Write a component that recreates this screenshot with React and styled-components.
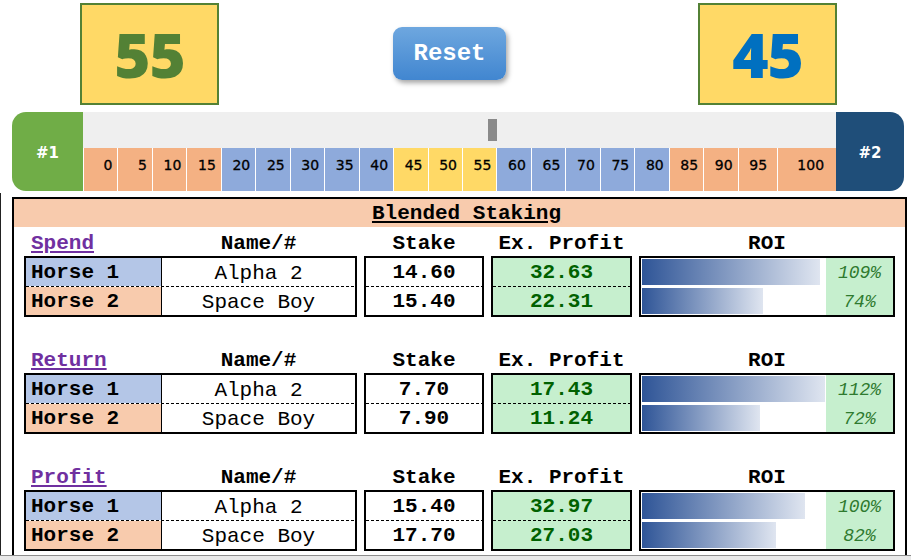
import React from 'react';
import styled, { createGlobalStyle } from 'styled-components';

const GlobalStyle = createGlobalStyle`
  html, body {
    margin: 0;
    padding: 0;
    background: #fff;
  }
  body {
    font-family: 'Liberation Mono', 'Courier New', monospace;
    color: #000;
  }
`;

const PageEl = styled.div`
  width: 911px;
  height: 560px;
  overflow: hidden;
  display: flex;
  flex-direction: column;
`;

// Top scores + reset
const TopRowEl = styled.div`
  flex: none;
  height: 112px;
  display: flex;
  align-items: flex-start;
  padding-left: 80px;
  box-sizing: border-box;
`;

const ScoreBoxEl = styled.div`
  margin-top: 3px;
  margin-left: ${({ offset }) => offset || 0}px;
  width: 139px;
  height: 102px;
  box-sizing: border-box;
  border: 2px solid #538135;
  background: #ffd966;
  display: flex;
  align-items: center;
  justify-content: center;
  font-family: 'Open Sans', 'DejaVu Sans', sans-serif;
  font-weight: 800;
  font-size: 62px;
  color: ${({ color }) => color};
  letter-spacing: -1px;
`;

const ResetButtonEl = styled.button`
  margin-top: 27px;
  margin-left: 174px;
  width: 113px;
  height: 53px;
  border: none;
  border-radius: 9px;
  background: linear-gradient(to bottom, #6ea7df, #4186d0);
  box-shadow: 2px 3px 5px rgba(0, 0, 0, 0.35);
  color: #fff;
  font-family: 'Liberation Mono', 'Courier New', monospace;
  font-weight: 700;
  font-size: 24px;
  padding: 0;
  cursor: pointer;
`;

// Slider band
const SliderEl = styled.div`
  flex: none;
  margin-left: 12px;
  width: 892px;
  height: 79px;
  display: flex;
`;

const CapEl = styled.div`
  width: ${({ w }) => w}px;
  flex: none;
  background: ${({ bg }) => bg};
  border-radius: ${({ side }) => (side === 'left' ? '14px 0 0 14px' : '0 14px 14px 0')};
  color: #fff;
  font-family: 'DejaVu Sans', Verdana, sans-serif;
  font-weight: 700;
  font-size: 15px;
  display: flex;
  align-items: center;
  justify-content: center;
  padding-top: 2px;
  box-sizing: border-box;
`;

const TrackEl = styled.div`
  position: relative;
  flex: 1;
  display: flex;
  flex-direction: column;
`;

const TrackTopEl = styled.div`
  height: 36px;
  flex: none;
  background: #efefef;
`;

const ThumbEl = styled.div`
  position: absolute;
  left: 405px;
  top: 7px;
  width: 9px;
  height: 22px;
  background: #8a8a8a;
`;

const TicksEl = styled.div`
  height: 43px;
  flex: none;
  display: flex;
  gap: 1px;
  padding-left: 1px;
  background: #fff;
`;

const TickEl = styled.div`
  flex: ${({ w }) => (w ? 'none' : 1)};
  width: ${({ w }) => (w ? `${w}px` : 'auto')};
  background: ${({ bg }) => bg};
  display: flex;
  justify-content: flex-end;
  padding: 9px ${({ pad }) => pad || 5}px 0 0;
  font-family: 'DejaVu Sans', Verdana, sans-serif;
  font-size: 14px;
  line-height: 16px;
  color: #000;
  -webkit-text-stroke: 0.3px #000;
`;

// Frame + panel
const FrameEl = styled.div`
  margin-top: 2px;
  flex: 1;
  min-height: 0;
  overflow: hidden;
  border-left: 1px solid #222;
  padding: 4px 0 0 11px;
  display: flex;
`;

const PanelEl = styled.div`
  width: 895px;
  flex: none;
  box-sizing: border-box;
  border: 2px solid #000;
  border-bottom: none;
`;

const BannerEl = styled.div`
  height: 28px;
  background: #f8cbad;
  display: flex;
  align-items: center;
  justify-content: center;
  padding-left: 14px;
  font-weight: 700;
  font-size: 21px;
  text-decoration: underline;
`;

const SectionEl = styled.div`
  display: grid;
  grid-template-columns: 333px 120px 141px 256px;
  grid-template-rows: 29px 61px;
  column-gap: 7px;
  margin: 0 0 27px 10px;
`;

const LabelEl = styled.div`
  display: flex;
  align-items: flex-end;
  justify-content: center;
  font-weight: 700;
  font-size: 21px;
  line-height: 24px;
`;

const NameLabelEl = styled.div`
  display: grid;
  grid-template-columns: 136px 1fr;
  align-items: end;
  font-weight: 700;
  font-size: 21px;
  line-height: 24px;
`;

const LinkEl = styled.span`
  color: #7030a0;
  text-decoration: underline;
  padding-left: 7px;
`;

const CenterTextEl = styled.span`
  text-align: center;
`;

const BoxEl = styled.div`
  border: 2px solid #000;
  background: ${({ bg }) => bg || '#fff'};
  display: flex;
  flex-direction: column;
`;

const LineEl = styled.div`
  height: 28px;
  display: flex;
  align-items: center;
  justify-content: center;
  font-size: 21px;
  font-weight: ${({ bold }) => (bold ? 700 : 400)};
  color: ${({ color }) => color || '#000'};
`;

const DashEl = styled.div`
  height: 1px;
  background: repeating-linear-gradient(to right, #000 0 3px, transparent 3px 5px);
`;

const HorseLineEl = styled.div`
  height: 28px;
  display: grid;
  grid-template-columns: 136px 1fr;
  font-size: 21px;
`;

const HorseCellEl = styled.div`
  background: ${({ bg }) => bg};
  border-right: 1px solid #000;
  display: flex;
  align-items: center;
  padding-left: 5px;
  font-weight: 700;
`;

const NameCellEl = styled.div`
  display: flex;
  align-items: center;
  justify-content: center;
  padding-top: 2px;
`;

const RoiBoxEl = styled.div`
  border: 2px solid #000;
  display: flex;
`;

const BarsColEl = styled.div`
  flex: 1;
  display: flex;
  flex-direction: column;
  gap: 1px;
`;

const BarRowEl = styled.div`
  height: 28px;
  padding: 1px;
  box-sizing: border-box;
`;

const BarEl = styled.div`
  height: 100%;
  background: linear-gradient(to right, #2f5597, #dfe5f0);
`;

const PctColEl = styled.div`
  width: 67px;
  background: #c6efce;
  display: flex;
  flex-direction: column;
  gap: 1px;
`;

const PctEl = styled.div`
  height: 28px;
  display: flex;
  align-items: center;
  justify-content: center;
  padding-top: 2px;
  box-sizing: border-box;
  font-style: italic;
  font-size: 18px;
  color: #2f7a2f;
`;

const StatusBarEl = styled.div`
  height: 4px;
  flex: none;
  border-top: 1px solid #8c8c8c;
  background: #e9e9e9;
`;

const PEACH = '#f4b183';
const BLUE = '#8eaadb';
const YELLOW = '#ffd966';

const ticks = [
  { v: 0, bg: PEACH },
  { v: 5, bg: PEACH },
  { v: 10, bg: PEACH },
  { v: 15, bg: PEACH },
  { v: 20, bg: BLUE },
  { v: 25, bg: BLUE },
  { v: 30, bg: BLUE },
  { v: 35, bg: BLUE },
  { v: 40, bg: BLUE },
  { v: 45, bg: YELLOW },
  { v: 50, bg: YELLOW },
  { v: 55, bg: YELLOW },
  { v: 60, bg: BLUE },
  { v: 65, bg: BLUE },
  { v: 70, bg: BLUE },
  { v: 75, bg: BLUE },
  { v: 80, bg: BLUE },
  { v: 85, bg: PEACH },
  { v: 90, bg: PEACH },
  { v: 95, bg: PEACH, pad: 10 },
  { v: 100, bg: PEACH, pad: 12, w: 46 },
];

const sections = [
  {
    title: 'Spend',
    rows: [
      { stake: '14.60', profit: '32.63', roi: 109 },
      { stake: '15.40', profit: '22.31', roi: 74 },
    ],
  },
  {
    title: 'Return',
    rows: [
      { stake: '7.70', profit: '17.43', roi: 112 },
      { stake: '7.90', profit: '11.24', roi: 72 },
    ],
  },
  {
    title: 'Profit',
    rows: [
      { stake: '15.40', profit: '32.97', roi: 100 },
      { stake: '17.70', profit: '27.03', roi: 82 },
    ],
  },
];

const horses = [
  { label: 'Horse 1', name: 'Alpha 2', bg: '#b4c6e7' },
  { label: 'Horse 2', name: 'Space Boy', bg: '#f8cbad' },
];

const PX_PER_PCT = 183 / 112;

const Section = ({ title, rows }) => (
  <SectionEl>
    <NameLabelEl>
      <LinkEl>{title}</LinkEl>
      <CenterTextEl>Name/#</CenterTextEl>
    </NameLabelEl>
    <LabelEl>Stake</LabelEl>
    <LabelEl>Ex. Profit</LabelEl>
    <LabelEl>ROI</LabelEl>

    <BoxEl>
      {horses.map((h, i) => (
        <React.Fragment key={h.label}>
          {i > 0 && <DashEl />}
          <HorseLineEl>
            <HorseCellEl bg={h.bg}>{h.label}</HorseCellEl>
            <NameCellEl>{h.name}</NameCellEl>
          </HorseLineEl>
        </React.Fragment>
      ))}
    </BoxEl>
    <BoxEl>
      {rows.map((r, i) => (
        <React.Fragment key={i}>
          {i > 0 && <DashEl />}
          <LineEl bold>{r.stake}</LineEl>
        </React.Fragment>
      ))}
    </BoxEl>
    <BoxEl bg="#c6efce">
      {rows.map((r, i) => (
        <React.Fragment key={i}>
          {i > 0 && <DashEl />}
          <LineEl bold color="#006100">
            {r.profit}
          </LineEl>
        </React.Fragment>
      ))}
    </BoxEl>
    <RoiBoxEl>
      <BarsColEl>
        {rows.map((r, i) => (
          <BarRowEl key={i}>
            <BarEl style={{ width: Math.round(r.roi * PX_PER_PCT) }} />
          </BarRowEl>
        ))}
      </BarsColEl>
      <PctColEl>
        {rows.map((r, i) => (
          <PctEl key={i}>{r.roi}%</PctEl>
        ))}
      </PctColEl>
    </RoiBoxEl>
  </SectionEl>
);

const App = () => {
  return (
    <PageEl>
      <GlobalStyle />
      <TopRowEl>
        <ScoreBoxEl color="#538135">55</ScoreBoxEl>
        <ResetButtonEl>Reset</ResetButtonEl>
        <ScoreBoxEl color="#0070c0" offset={192}>
          45
        </ScoreBoxEl>
      </TopRowEl>

      <SliderEl>
        <CapEl side="left" w={71} bg="#70ad47">
          #1
        </CapEl>
        <TrackEl>
          <TrackTopEl />
          <ThumbEl />
          <TicksEl>
            {ticks.map((t) => (
              <TickEl key={t.v} bg={t.bg} pad={t.pad} w={t.w}>
                {t.v}
              </TickEl>
            ))}
          </TicksEl>
        </TrackEl>
        <CapEl side="right" w={68} bg="#1f4e79">
          #2
        </CapEl>
      </SliderEl>

      <FrameEl>
        <PanelEl>
          <BannerEl>Blended Staking</BannerEl>
          {sections.map((s) => (
            <Section key={s.title} {...s} />
          ))}
        </PanelEl>
      </FrameEl>
      <StatusBarEl />
    </PageEl>
  );
};

export default App;
